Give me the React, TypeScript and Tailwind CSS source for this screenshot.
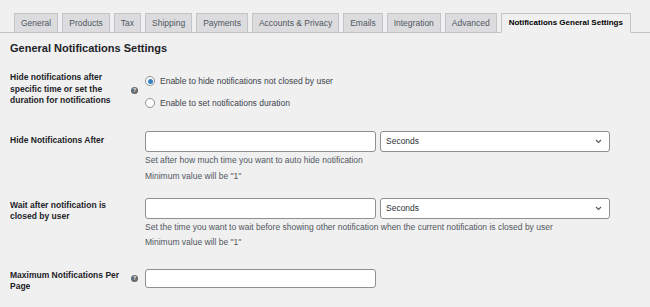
import React from 'react';

const tabs = [
  'General',
  'Products',
  'Tax',
  'Shipping',
  'Payments',
  'Accounts & Privacy',
  'Emails',
  'Integration',
  'Advanced',
];

const HelpIcon = () => (
  <span className="flex h-[7px] w-[7px] items-center justify-center rounded-full bg-[#646970] text-[5px] font-bold leading-none text-white">
    ?
  </span>
);

const Chevron = () => (
  <svg width="7" height="5" viewBox="0 0 7 5" className="text-[#50575e]">
    <path d="M1 1l2.5 2.5L6 1" fill="none" stroke="currentColor" strokeWidth="1.1" />
  </svg>
);

const TextInput = () => (
  <div className="h-[21px] w-[231px] rounded-[3px] border border-[#8c8f94] bg-white" />
);

const Select = () => (
  <div className="flex h-[21px] w-[230px] items-center justify-between rounded-[3px] border border-[#8c8f94] bg-white pl-[5px] pr-[7px] text-[8.5px] text-[#2c3338]">
    <span>Seconds</span>
    <Chevron />
  </div>
);

const Radio = ({ checked, label }: { checked?: boolean; label: string }) => (
  <div className="flex items-center gap-[5px]">
    <span className="flex h-[10px] w-[10px] items-center justify-center rounded-full border border-[#8c8f94] bg-white">
      {checked && <span className="h-[5px] w-[5px] rounded-full bg-[#3582c4]" />}
    </span>
    <span className="text-[8.5px] text-[#3c434a]">{label}</span>
  </div>
);

const Label = ({ children }: { children: React.ReactNode }) => (
  <div className="w-[121px] text-[8.5px] font-semibold leading-[11.5px] text-[#1d2327]">{children}</div>
);

export default function App() {
  return (
    <div
      className="h-[307px] w-[650px] overflow-hidden bg-[#f0f0f1]"
      style={{ fontFamily: '"Liberation Sans", Arial, sans-serif' }}
    >
      {/* tabs */}
      <div className="mt-[13px] flex h-[20px] items-end gap-[4px] whitespace-nowrap border-b border-[#c3c4c7] pl-[14px]">
        {tabs.map((t) => (
          <div
            key={t}
            className="-mb-px flex h-[20px] shrink-0 items-center border border-[#c3c4c7] bg-[#dcdcde] px-[6px] text-[8.5px] text-[#50575e]"
          >
            {t}
          </div>
        ))}
        <div className="-mb-px flex h-[20px] shrink-0 items-center border border-[#c3c4c7] border-b-[#f0f0f1] bg-[#f0f0f1] px-[7px] text-[8px] font-bold text-[#000]">
          Notifications General Settings
        </div>
      </div>

      <div className="pl-[10px]">
        <h2 className="mt-[8px] text-[11px] font-bold leading-[14px] text-[#1d2327]">General Notifications Settings</h2>

        {/* row 1 */}
        <div className="mt-[17px] flex">
          <Label>
            Hide notifications after
            <br />
            specific time or set the
            <br />
            duration for notifications
          </Label>
          <div className="flex w-[14px] items-center">
            <HelpIcon />
          </div>
          <div className="flex flex-col gap-[9px] pt-[3px]">
            <Radio checked label="Enable to hide notifications not closed by user" />
            <Radio label="Enable to set notifications duration" />
          </div>
        </div>

        {/* row 2 */}
        <div className="mt-[21px] flex">
          <div className="flex h-[21px] items-center">
            <Label>Hide Notifications After</Label>
          </div>
          <div className="w-[14px]" />
          <div>
            <div className="flex gap-[4px]">
              <TextInput />
              <Select />
            </div>
            <p className="text-[8.5px] leading-[16px] text-[#50575e]">
              Set after how much time you want to auto hide notification
            </p>
            <p className="text-[8.5px] leading-[16px] text-[#50575e]">Minimum value will be "1"</p>
          </div>
        </div>

        {/* row 3 */}
        <div className="mt-[14px] flex">
          <div className="pt-[2px]">
            <Label>
              Wait after notification is
              <br />
              closed by user
            </Label>
          </div>
          <div className="w-[14px]" />
          <div>
            <div className="flex gap-[4px]">
              <TextInput />
              <Select />
            </div>
            <p className="text-[8.5px] leading-[16px] text-[#50575e]">
              Set the time you want to wait before showing other notification when the current notification is closed by user
            </p>
            <p className="text-[8.5px] leading-[15px] text-[#50575e]">Minimum value will be "1"</p>
          </div>
        </div>

        {/* row 4 */}
        <div className="mt-[19px] flex">
          <div className="pt-[1px]">
            <Label>
              Maximum Notifications Per
              <br />
              Page
            </Label>
          </div>
          <div className="flex h-[19px] w-[14px] items-center">
            <HelpIcon />
          </div>
          <div className="h-[19px] w-[231px] rounded-[3px] border border-[#8c8f94] bg-white" />
        </div>
      </div>
    </div>
  );
}
